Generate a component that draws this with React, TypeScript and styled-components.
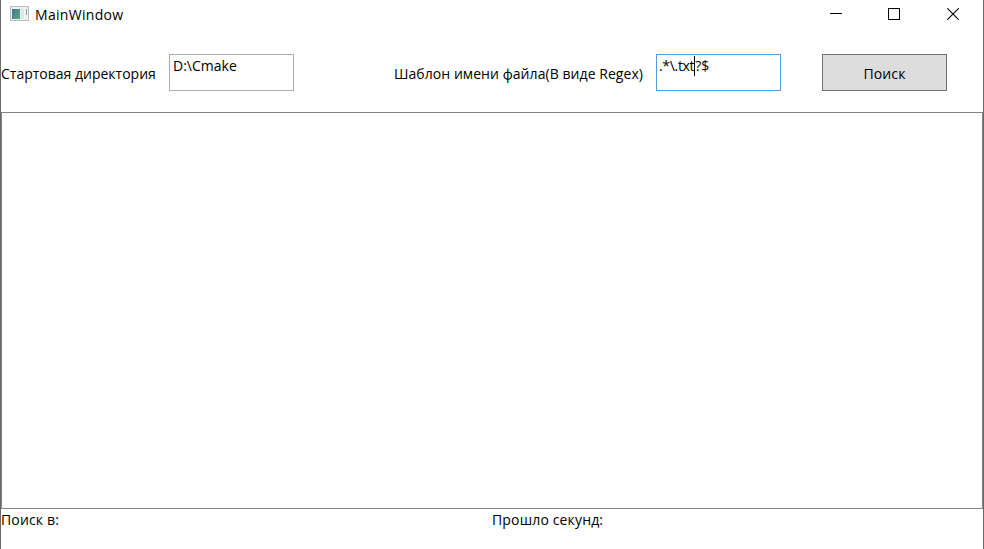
import React from "react";
import styled, { createGlobalStyle } from "styled-components";

const GlobalStyle = createGlobalStyle`
  * { box-sizing: border-box; }
  body { margin: 0; background: #fff; overflow: hidden; }
`;

const Window = styled.div`
  display: flex;
  flex-direction: column;
  width: 984px;
  height: 549px;
  background: #fff;
  border: solid #6b6b6b;
  border-width: 0 1px;
  color: #000;
  font-family: "Open Sans", "Noto Sans", sans-serif;
  font-size: 14px;
  line-height: 20px;
`;

const TitleBar = styled.header`
  display: flex;
  align-items: flex-start;
  height: 30px;
`;

const AppIcon = styled.svg`
  display: block;
  margin: 6px 0 0 9px;
`;

const Text = styled.span<{ $spacing?: number }>`
  display: block;
  white-space: pre;
  letter-spacing: ${({ $spacing = 0 }) => $spacing}px;
`;

const Title = styled(Text)`
  margin: 5px auto 0 6px;
`;

const Controls = styled.div`
  display: grid;
  grid-template-columns: 58px 58px 60px;
`;

const ControlButton = styled.button`
  display: flex;
  justify-content: center;
  height: 28px;
  padding: 8px 0 0;
  border: 0;
  background: transparent;
`;

const SearchForm = styled.div`
  display: grid;
  grid-template-columns: 168px 125px 100px 262px 125px 41px 125px;
  align-items: start;
  height: 82px;
  padding-top: 24px;
`;

const Label = styled(Text)`
  margin-top: 10px;
`;

const TextBox = styled.div<{ $focused?: boolean }>`
  display: flex;
  height: 37px;
  padding: 1px ${({ $focused }) => ($focused ? 2 : 3)}px;
  border: 1px solid ${({ $focused }) => ($focused ? "#569de5" : "#abadb3")};
  cursor: text;
`;

const Caret = styled.i`
  width: 1px;
  height: 20px;
  background: #000;
`;

const SearchButton = styled.button`
  display: flex;
  justify-content: center;
  align-items: flex-start;
  height: 37px;
  padding: 9px 0 0;
  border: 1px solid #707070;
  background: #ddd;
  color: #000;
  font: inherit;
`;

const Results = styled.main`
  height: 397px;
  border: 1px solid #828282;
`;

const StatusBar = styled.footer`
  display: grid;
  grid-template-columns: 491px 1fr;
  height: 40px;
  padding-top: 1px;
`;

export default function App() {
  return (
    <>
      <GlobalStyle />
      <Window>
        <TitleBar>
          <AppIcon width="19" height="15" viewBox="0 0 19 15">
            <defs>
              <linearGradient id="pane" x1="0" y1="0" x2="1" y2="1">
                <stop offset="0" stopColor="#3c7590" />
                <stop offset="1" stopColor="#58aa83" />
              </linearGradient>
            </defs>
            <rect x=".5" y=".5" width="18" height="14" fill="#f1f3f3" stroke="#b5bdbd" />
            <rect x="2" y="3" width="8" height="10" fill="url(#pane)" />
            <rect x="11" y="3" width="3" height="10" fill="#e0e6e6" />
            <path d="M16.5 3v6" stroke="#79a493" />
          </AppIcon>
          <Title $spacing={0.3}>MainWindow</Title>
          <Controls>
            <ControlButton aria-label="Minimize">
              <svg width="12" height="12"><path d="M0 5.5h12" stroke="#000" /></svg>
            </ControlButton>
            <ControlButton aria-label="Maximize">
              <svg width="12" height="12"><rect x=".5" y=".5" width="11" height="11" fill="none" stroke="#000" /></svg>
            </ControlButton>
            <ControlButton aria-label="Close">
              <svg width="12" height="12"><path d="M.3.3l11.4 11.4M11.7.3L.3 11.7" stroke="#000" strokeWidth="1.1" /></svg>
            </ControlButton>
          </Controls>
        </TitleBar>
        <SearchForm>
          <Label>Стартовая директория</Label>
          <TextBox><Text>D:\Cmake</Text></TextBox>
          <span />
          <Label $spacing={0.06}>Шаблон имени файла(В виде Regex)</Label>
          <TextBox $focused><Text $spacing={-0.32}>.*\.txt</Text><Caret /><Text>?$</Text></TextBox>
          <span />
          <SearchButton><Text $spacing={0.1}>Поиск</Text></SearchButton>
        </SearchForm>
        <Results />
        <StatusBar>
          <Text $spacing={0.15}>Поиск в:</Text>
          <Text $spacing={0.15}>Прошло секунд:</Text>
        </StatusBar>
      </Window>
    </>
  );
}
